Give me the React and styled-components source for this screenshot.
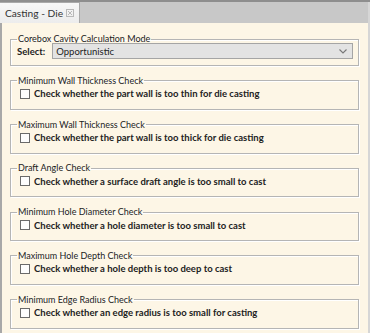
import React from "react"
import styled, { createGlobalStyle } from "styled-components"

const GlobalStyle = createGlobalStyle`
  html, body {
    margin: 0;
    padding: 0;
    background: #fdf6e6;
  }
  body {
    font-family: Lato, "Open Sans", sans-serif;
  }
`

const Window = styled.div`
  width: 370px;
  height: 333px;
  display: flex;
  flex-direction: column;
  overflow: hidden;
  box-sizing: border-box;
  border-top: 2px solid #8e8e8e;
`

const TabBar = styled.div`
  height: 21px;
  background: #c8c8c8;
  display: flex;
  align-items: flex-end;
  flex-shrink: 0;
  border-right: 2px solid #d6d6d6;
`

const Tab = styled.div`
  height: 21px;
  box-sizing: border-box;
  padding: 0 5px 0 5px;
  display: flex;
  align-items: center;
  gap: 3px;
  background: linear-gradient(#f7f7f7, #ececec);
  border: 1px solid #a9a9a9;
  border-bottom: none;
  border-left: none;
  font-size: 10.2px;
  color: #333;
`

const Content = styled.div`
  flex: 1;
  background: #fdf6e6;
  border-left: 2px solid #a8a8a8;
  border-right: 2px solid #d6d6d6;
  padding: 10px 9px 0 8px;
  display: flex;
  flex-direction: column;
  gap: 8.8px;
`

const Group = styled.fieldset`
  margin: 0;
  padding: ${({ $select }) => ($select ? "0 5px 6px 6px" : "0 5px 8px 9px")};
  border: 1px solid #b5b5b5;
  box-shadow: inset 1px 1px 0 #ffffff, 1px 1px 0 #ffffff;
`

const Legend = styled.legend`
  padding: 0 1px;
  margin-left: ${({ $select }) => ($select ? "0" : "-3px")};
  font-size: 9px;
  color: #222;
  line-height: 12px;
`

const SelectRow = styled.div`
  display: flex;
  align-items: center;
  gap: 7px;
  margin-top: -2px;
`

const Label = styled.span`
  font-size: 9.5px;
  font-weight: 700;
  color: #222;
`

const Select = styled.div`
  flex: 1;
  height: 14px;
  background: #e3e3e3;
  border: 1px solid #a5a5a5;
  display: flex;
  align-items: center;
  justify-content: space-between;
  padding: 0 5px 0 3px;
  font-size: 9.5px;
  color: #222;
`

const CheckRow = styled.label`
  display: flex;
  align-items: center;
  gap: 4px;
  height: 14px;
  font-size: 9.5px;
  font-weight: 700;
  color: #222;
  margin-top: 0;
`

const Box = styled.span`
  width: 10px;
  height: 10px;
  box-sizing: border-box;
  border: 1px solid #6a6a6a;
  background: #fdfdfd;
  flex-shrink: 0;
`

const Close = () => (
  <svg width="8" height="8" viewBox="0 0 8 8">
    <rect x="0.5" y="0.5" width="7" height="7" fill="none" stroke="#b8b8b8" />
    <path d="M2 2 L6 6 M6 2 L2 6" stroke="#b8b8b8" strokeWidth="1" />
  </svg>
)

const Chevron = () => (
  <svg width="8" height="5" viewBox="0 0 8 5">
    <path d="M0.5 0.5 L4 4 L7.5 0.5" fill="none" stroke="#777" strokeWidth="1.1" />
  </svg>
)

const checks = [
  ["Minimum Wall Thickness Check", "Check whether the part wall is too thin for die casting"],
  ["Maximum Wall Thickness Check", "Check whether the part wall is too thick for die casting"],
  ["Draft Angle Check", "Check whether a surface draft angle is too small to cast"],
  ["Minimum Hole Diameter Check", "Check whether a hole diameter is too small to cast"],
  ["Maximum Hole Depth Check", "Check whether a hole depth is too deep to cast"],
  ["Minimum Edge Radius Check", "Check whether an edge radius is too small for casting"],
]

const App = () => (
  <Window>
    <GlobalStyle />
    <TabBar>
      <Tab>
        Casting - Die <Close />
      </Tab>
    </TabBar>
    <Content>
      <Group $select>
        <Legend $select>Corebox Cavity Calculation Mode</Legend>
        <SelectRow>
          <Label>Select:</Label>
          <Select>
            Opportunistic
            <Chevron />
          </Select>
        </SelectRow>
      </Group>
      {checks.map(([title, text]) => (
        <Group key={title}>
          <Legend>{title}</Legend>
          <CheckRow>
            <Box />
            {text}
          </CheckRow>
        </Group>
      ))}
    </Content>
  </Window>
)

export default App
